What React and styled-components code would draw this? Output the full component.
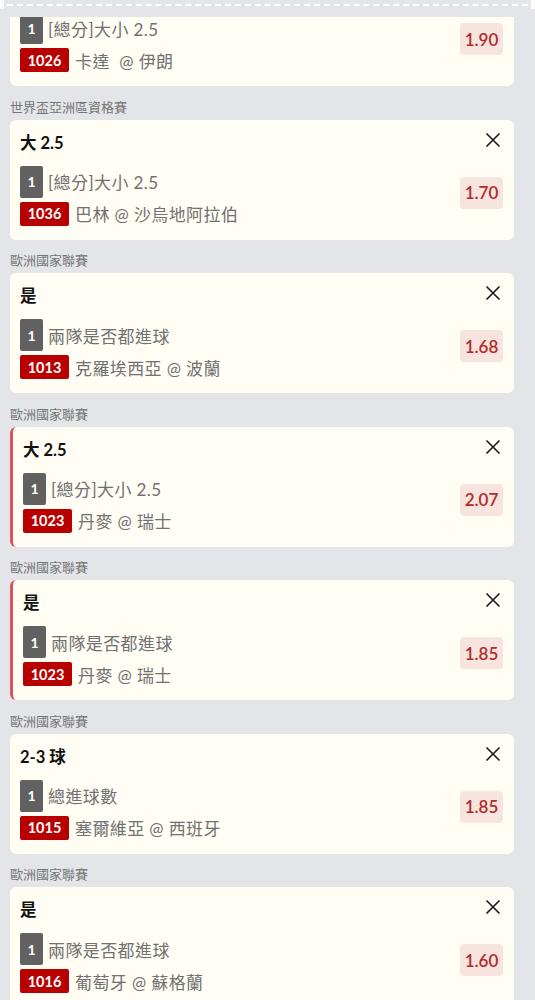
import React from 'react'
import styled, { createGlobalStyle } from 'styled-components'

const bets = [
  { league: '', title: '', market: '[總分]大小 2.5', code: '1026', match: '卡達  @ 伊朗', odds: '1.90' },
  { league: '世界盃亞洲區資格賽', title: '大 2.5', market: '[總分]大小 2.5', code: '1036', match: '巴林 @ 沙烏地阿拉伯', odds: '1.70' },
  { league: '歐洲國家聯賽', title: '是', market: '兩隊是否都進球', code: '1013', match: '克羅埃西亞 @ 波蘭', odds: '1.68' },
  { league: '歐洲國家聯賽', title: '大 2.5', market: '[總分]大小 2.5', code: '1023', match: '丹麥 @ 瑞士', odds: '2.07', flagged: true },
  { league: '歐洲國家聯賽', title: '是', market: '兩隊是否都進球', code: '1023', match: '丹麥 @ 瑞士', odds: '1.85', flagged: true },
  { league: '歐洲國家聯賽', title: '2-3 球', market: '總進球數', code: '1015', match: '塞爾維亞 @ 西班牙', odds: '1.85' },
  { league: '歐洲國家聯賽', title: '是', market: '兩隊是否都進球', code: '1016', match: '葡萄牙 @ 蘇格蘭', odds: '1.60' },
]

function CloseIcon() {
  return (
    <svg width="16" height="16" viewBox="0 0 16 16">
      <path d="M1.5 1.5 L14.5 14.5 M14.5 1.5 L1.5 14.5" stroke="#1a1a1a" strokeWidth="1.6" fill="none" />
    </svg>
  )
}

export default function App() {
  return (
    <>
      <GlobalStyle />
      <Perforation />
      <List>
        {bets.map((b, i) => (
          <div key={i}>
            {b.league && <League>{b.league}</League>}
            <Card $flagged={b.flagged}>
              <Head>
                <Title>{b.title}</Title>
                <Close><CloseIcon /></Close>
              </Head>
              <Body>
                <Lines>
                  <Line>
                    <LegBadge>1</LegBadge>
                    <Market>{b.market}</Market>
                  </Line>
                  <Line>
                    <CodeBadge>{b.code}</CodeBadge>
                    <Market>{b.match}</Market>
                  </Line>
                </Lines>
                <Odds>{b.odds}</Odds>
              </Body>
            </Card>
          </div>
        ))}
      </List>
    </>
  )
}

const GlobalStyle = createGlobalStyle`
  body {
    margin: 0;
    background: #e4e5e8;
    font-family: Lato, "Noto Sans CJK TC", sans-serif;
    overflow: hidden;
  }
`

const Perforation = styled.div`
  position: fixed;
  top: 0;
  left: 0;
  right: 0;
  height: 17px;
  background: #e4e5e8;
  z-index: 2;

  &::before {
    content: '';
    position: absolute;
    top: 4px;
    left: 7px;
    right: 7px;
    border-top: 2px dashed #ffffff;
  }

  &::after {
    content: '';
    position: absolute;
    top: -5px;
    left: -5px;
    right: -5px;
    height: 14px;
    border-left: 9px solid #fbfbfb;
    border-right: 9px solid #fbfbfb;
    border-radius: 8px;
  }
`

const List = styled.div`
  margin-top: -34px;
  padding: 0 21px 0 10px;
`

const League = styled.div`
  padding: 12.5px 0 5px;
  font-size: 13px;
  line-height: 16px;
  color: #757575;
`

const Card = styled.div`
  background: #fffdf4;
  border-radius: 6px;
  border-left: ${p => (p.$flagged ? '3px solid #d9545d' : 'none')};
  padding: 12px 11px 10px 10px;
  height: 120px;
  box-sizing: border-box;
`

const Head = styled.div`
  display: flex;
  justify-content: space-between;
  align-items: center;
  height: 22px;
`

const Title = styled.div`
  font-size: 16.5px;
  font-weight: 700;
  color: #111;
  line-height: 22px;
`

const Close = styled.div`
  display: flex;
  margin-right: 2px;
  margin-top: -6px;
`

const Body = styled.div`
  display: flex;
  align-items: flex-start;
  justify-content: space-between;
  margin-top: 12px;
`

const Lines = styled.div`
  display: flex;
  flex-direction: column;
`

const Line = styled.div`
  display: flex;
  align-items: center;
  height: 32px;
`

const LegBadge = styled.div`
  width: 23px;
  height: 32px;
  border-radius: 2px;
  background: #616161;
  color: #fff;
  font-size: 14px;
  font-weight: 700;
  display: flex;
  align-items: center;
  justify-content: center;
  margin-right: 5px;
`

const CodeBadge = styled.div`
  width: 49px;
  height: 24px;
  border-radius: 2px;
  background: #b80000;
  color: #fff;
  font-size: 14.5px;
  font-weight: 700;
  display: flex;
  align-items: center;
  justify-content: center;
  margin-right: 6px;
`

const Market = styled.div`
  font-size: 17px;
  letter-spacing: 0.4px;
  color: #717171;
  white-space: pre;
`

const Odds = styled.div`
  width: 43px;
  height: 32px;
  margin-top: 11px;
  border-radius: 4px;
  background: #f8e4de;
  color: #b02a2c;
  font-size: 17px;
  font-weight: 600;
  display: flex;
  align-items: center;
  justify-content: center;
`
